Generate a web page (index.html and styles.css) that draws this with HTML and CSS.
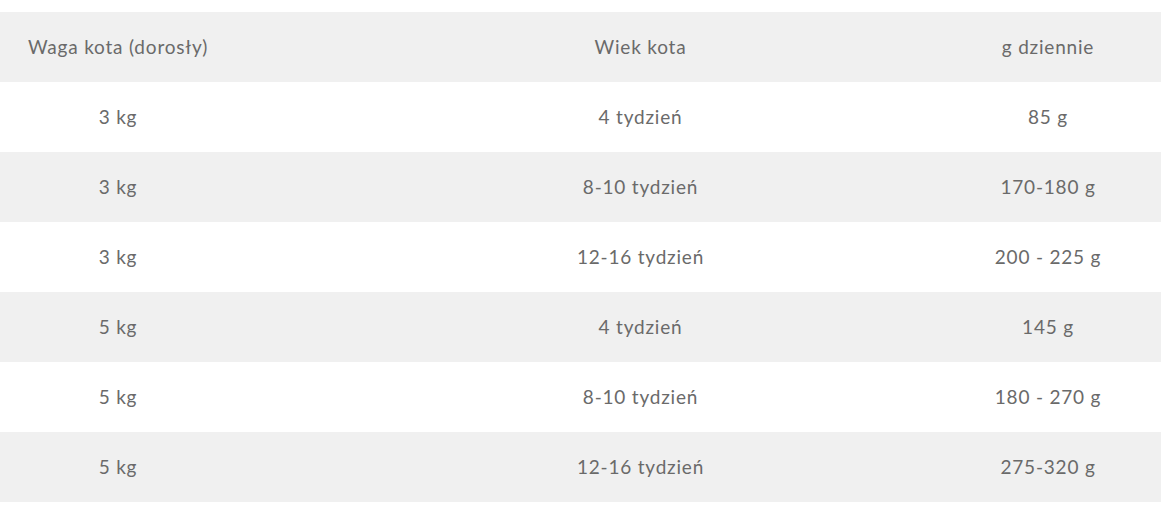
FILE: index.html
```html
<!DOCTYPE html>
<html lang="pl">
<head>
<meta charset="utf-8">
<title>Tabela karmienia</title>
<link rel="stylesheet" href="styles.css">
</head>
<body>
<div class="table">
  <div class="row shade">
    <div class="cell c1">Waga kota (dorosły)</div>
    <div class="cell c2">Wiek kota</div>
    <div class="cell c3">g dziennie</div>
  </div>
  <div class="row">
    <div class="cell c1">3 kg</div>
    <div class="cell c2">4 tydzień</div>
    <div class="cell c3">85 g</div>
  </div>
  <div class="row shade">
    <div class="cell c1">3 kg</div>
    <div class="cell c2">8-10 tydzień</div>
    <div class="cell c3">170-180 g</div>
  </div>
  <div class="row">
    <div class="cell c1">3 kg</div>
    <div class="cell c2">12-16 tydzień</div>
    <div class="cell c3">200 - 225 g</div>
  </div>
  <div class="row shade">
    <div class="cell c1">5 kg</div>
    <div class="cell c2">4 tydzień</div>
    <div class="cell c3">145 g</div>
  </div>
  <div class="row">
    <div class="cell c1">5 kg</div>
    <div class="cell c2">8-10 tydzień</div>
    <div class="cell c3">180 - 270 g</div>
  </div>
  <div class="row shade">
    <div class="cell c1">5 kg</div>
    <div class="cell c2">12-16 tydzień</div>
    <div class="cell c3">275-320 g</div>
  </div>
</div>
</body>
</html>
```
FILE: styles.css
```css
html, body {
  margin: 0;
  padding: 0;
  background: #ffffff;
}
body {
  font-family: Lato, "Open Sans", "Liberation Sans", sans-serif;
  font-size: 19px;
  color: #6a6a6a;
  padding-top: 12px;
}
.table {
  display: flex;
  flex-direction: column;
}
.row {
  display: grid;
  grid-template-columns: 236px 1fr 226px;
  height: 70px;
}
.row.shade {
  background: #f0f0f0;
}
.cell {
  display: flex;
  align-items: center;
  justify-content: center;
  white-space: nowrap;
  letter-spacing: 0.8px;
  padding-bottom: 2px;
}
.c2 {
  padding-left: 110px;
}
```
